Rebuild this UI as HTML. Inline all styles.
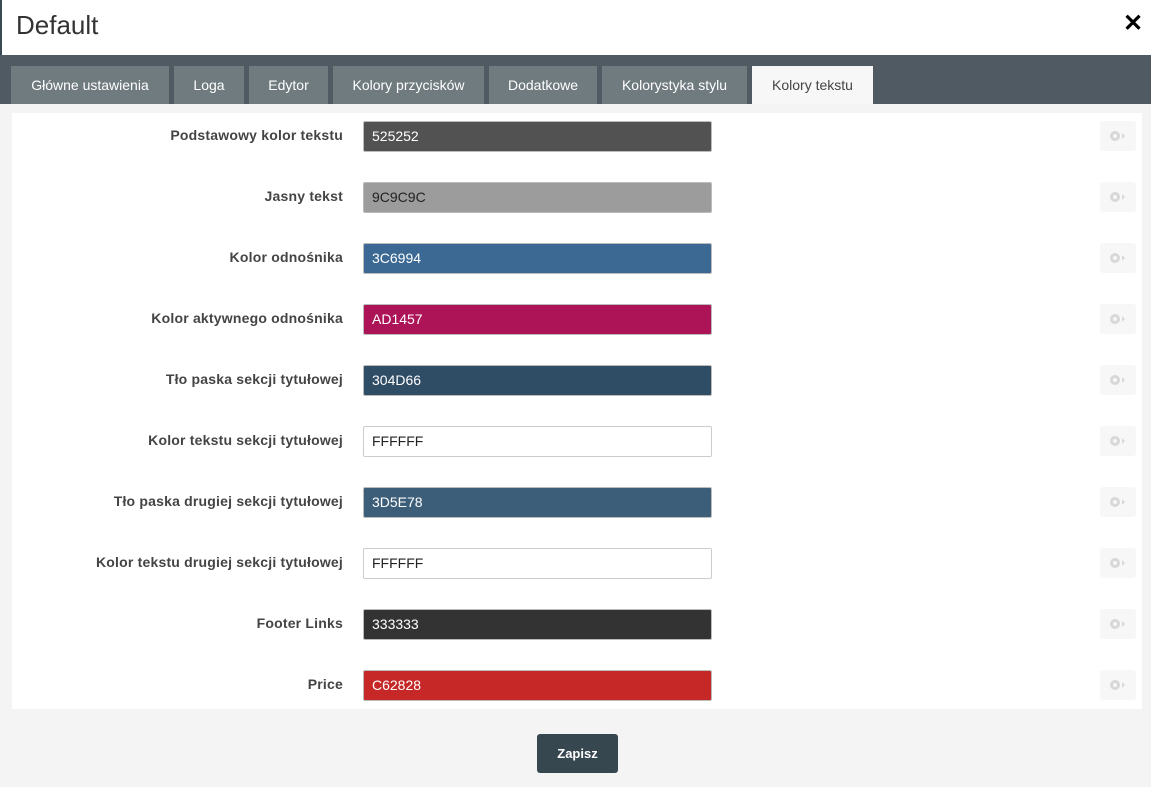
<!DOCTYPE html>
<html><head><meta charset="utf-8"><style>
*{box-sizing:border-box;margin:0;padding:0}
body{width:1151px;height:787px;overflow:hidden;background:#f4f4f4;font-family:"Liberation Sans",Arial,sans-serif;position:relative}
.hdr{position:absolute;left:0;top:0;width:1151px;height:55px;background:#fff;border-left:2px solid #3a4a55}
.hdr h1{position:absolute;left:14px;top:10px;font-size:26px;font-weight:normal;color:#333}
.x{position:absolute;left:1121px;top:9px;font-size:24px;font-weight:bold;color:#000}
.band{position:absolute;left:0;top:55px;width:1151px;height:49px;background:#4f5a62}
.tab{position:absolute;top:11px;height:38px;background:#6f7b7f;color:#fff;font-size:14px;line-height:38px;text-align:center}
.tab.a{background:#f7f7f7;color:#444}
.panel{position:absolute;left:12px;top:113px;width:1130px;height:596px;background:#fff}
.row{position:absolute;left:0;width:1130px;height:31px}
.lbl{position:absolute;right:799px;top:6px;font-size:14px;font-weight:bold;color:#444;white-space:nowrap;letter-spacing:0.2px}
.inp{position:absolute;left:351px;top:0;width:349px;height:31px;border:1px solid #bbb;border-radius:2px;font-size:14px;line-height:29px;padding-left:8px;color:#fff}
.g{position:absolute;left:1088px;top:0;width:36px;height:30px;background:#f7f7f7;border-radius:3px}
.foot{position:absolute;left:0;top:709px;width:1151px;height:78px;background:#f4f4f4}
.btn{position:absolute;left:537px;top:734px;width:81px;height:39px;background:#37474f;border-radius:3px;color:#fff;font-weight:bold;font-size:13px;text-align:center;line-height:39px}
</style></head><body>
<div class="hdr"><h1>Default</h1><div class="x">✕</div></div>
<div class="band">
<div class="tab" style="left:11px;width:158px">Główne ustawienia</div>
<div class="tab" style="left:174px;width:70px">Loga</div>
<div class="tab" style="left:249px;width:79px">Edytor</div>
<div class="tab" style="left:333px;width:151px">Kolory przycisków</div>
<div class="tab" style="left:489px;width:108px">Dodatkowe</div>
<div class="tab" style="left:602px;width:145px">Kolorystyka stylu</div>
<div class="tab a" style="left:752px;width:121px">Kolory tekstu</div>
</div>
<div class="panel">
<div class="row" style="top:8px"><div class="lbl">Podstawowy kolor tekstu</div><div class="inp" style="background:#525252">525252</div><div class="g"><svg width="36" height="30"><circle cx="15" cy="15" r="3.5" fill="none" stroke="#d8d8d8" stroke-width="3"/><path d="M22 12l3 3-3 3z" fill="#d8d8d8"/></svg></div></div>
<div class="row" style="top:69px"><div class="lbl">Jasny tekst</div><div class="inp" style="background:#9c9c9c;color:#222">9C9C9C</div><div class="g"><svg width="36" height="30"><circle cx="15" cy="15" r="3.5" fill="none" stroke="#d8d8d8" stroke-width="3"/><path d="M22 12l3 3-3 3z" fill="#d8d8d8"/></svg></div></div>
<div class="row" style="top:130px"><div class="lbl">Kolor odnośnika</div><div class="inp" style="background:#3c6994">3C6994</div><div class="g"><svg width="36" height="30"><circle cx="15" cy="15" r="3.5" fill="none" stroke="#d8d8d8" stroke-width="3"/><path d="M22 12l3 3-3 3z" fill="#d8d8d8"/></svg></div></div>
<div class="row" style="top:191px"><div class="lbl">Kolor aktywnego odnośnika</div><div class="inp" style="background:#ad1457">AD1457</div><div class="g"><svg width="36" height="30"><circle cx="15" cy="15" r="3.5" fill="none" stroke="#d8d8d8" stroke-width="3"/><path d="M22 12l3 3-3 3z" fill="#d8d8d8"/></svg></div></div>
<div class="row" style="top:252px"><div class="lbl">Tło paska sekcji tytułowej</div><div class="inp" style="background:#304d66">304D66</div><div class="g"><svg width="36" height="30"><circle cx="15" cy="15" r="3.5" fill="none" stroke="#d8d8d8" stroke-width="3"/><path d="M22 12l3 3-3 3z" fill="#d8d8d8"/></svg></div></div>
<div class="row" style="top:313px"><div class="lbl">Kolor tekstu sekcji tytułowej</div><div class="inp" style="background:#fff;color:#222;border-color:#ccc">FFFFFF</div><div class="g"><svg width="36" height="30"><circle cx="15" cy="15" r="3.5" fill="none" stroke="#d8d8d8" stroke-width="3"/><path d="M22 12l3 3-3 3z" fill="#d8d8d8"/></svg></div></div>
<div class="row" style="top:374px"><div class="lbl">Tło paska drugiej sekcji tytułowej</div><div class="inp" style="background:#3d5e78">3D5E78</div><div class="g"><svg width="36" height="30"><circle cx="15" cy="15" r="3.5" fill="none" stroke="#d8d8d8" stroke-width="3"/><path d="M22 12l3 3-3 3z" fill="#d8d8d8"/></svg></div></div>
<div class="row" style="top:435px"><div class="lbl">Kolor tekstu drugiej sekcji tytułowej</div><div class="inp" style="background:#fff;color:#222;border-color:#ccc">FFFFFF</div><div class="g"><svg width="36" height="30"><circle cx="15" cy="15" r="3.5" fill="none" stroke="#d8d8d8" stroke-width="3"/><path d="M22 12l3 3-3 3z" fill="#d8d8d8"/></svg></div></div>
<div class="row" style="top:496px"><div class="lbl">Footer Links</div><div class="inp" style="background:#333">333333</div><div class="g"><svg width="36" height="30"><circle cx="15" cy="15" r="3.5" fill="none" stroke="#d8d8d8" stroke-width="3"/><path d="M22 12l3 3-3 3z" fill="#d8d8d8"/></svg></div></div>
<div class="row" style="top:557px"><div class="lbl">Price</div><div class="inp" style="background:#c62828">C62828</div><div class="g"><svg width="36" height="30"><circle cx="15" cy="15" r="3.5" fill="none" stroke="#d8d8d8" stroke-width="3"/><path d="M22 12l3 3-3 3z" fill="#d8d8d8"/></svg></div></div>
</div>
<div class="foot"></div>
<div class="btn">Zapisz</div>
</body></html>
